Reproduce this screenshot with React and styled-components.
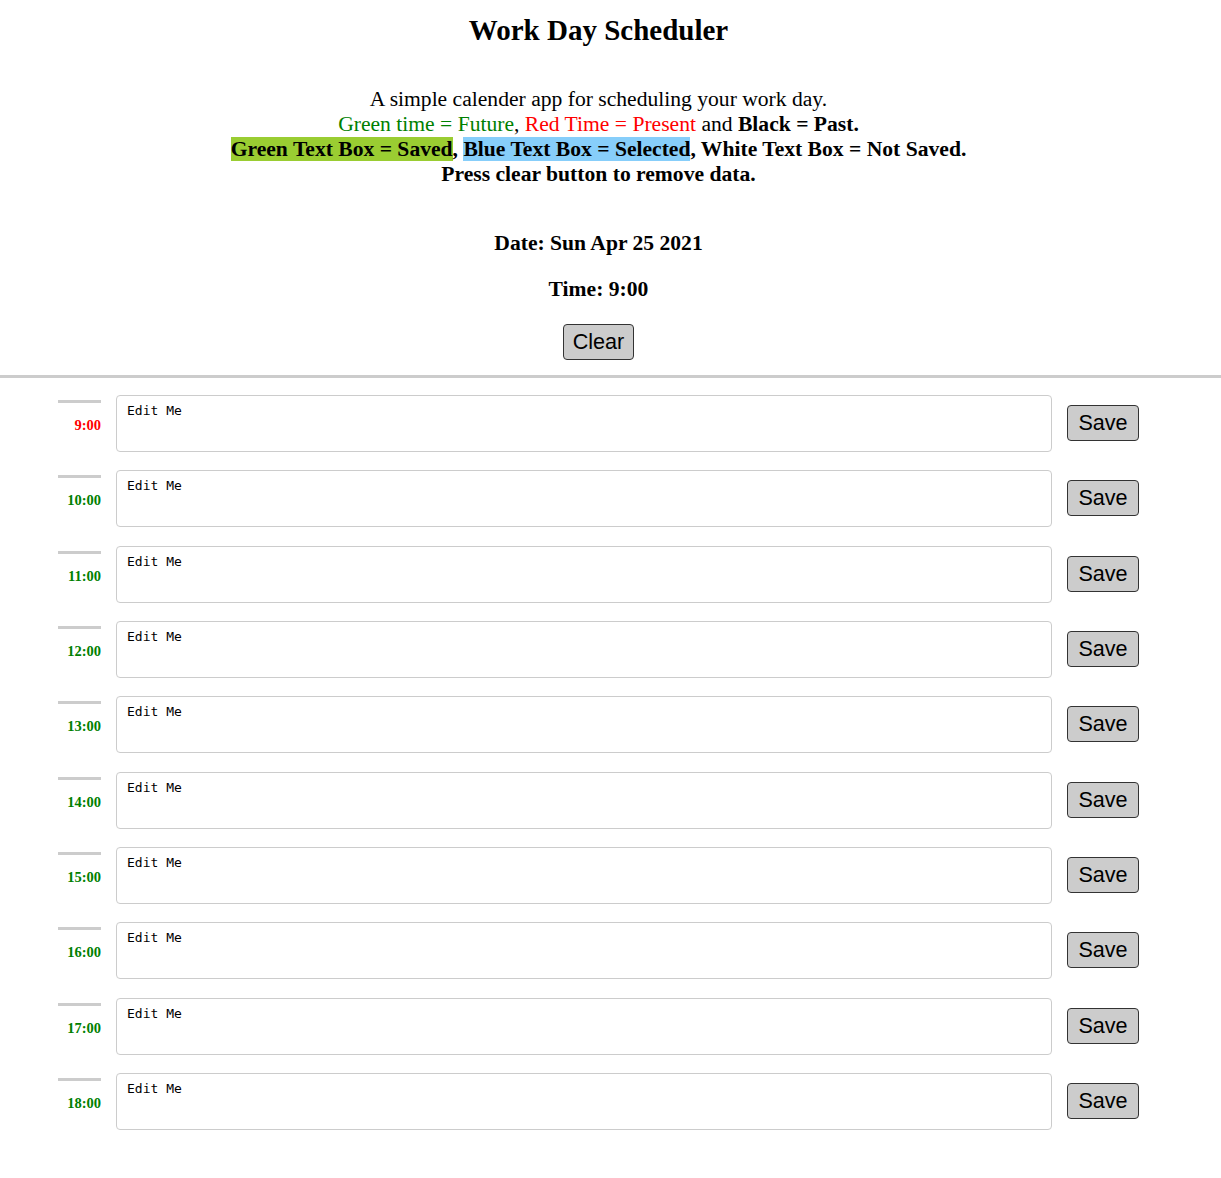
import React from "react";
import styled, { createGlobalStyle } from "styled-components";

const GlobalStyle = createGlobalStyle`
  body {
    margin: 0;
    background: #fff;
    font-family: "Liberation Serif", "Times New Roman", serif;
    color: #000;
  }
`;

const hours = [9, 10, 11, 12, 13, 14, 15, 16, 17, 18];
const currentHour = 9;

export default function App() {
  return (
    <>
      <GlobalStyle />
      <Header>
        <Title>Work Day Scheduler</Title>
        <Lead>
          A simple calender app for scheduling your work day.
          <br />
          <Green>Green time = Future</Green>, <Red>Red Time = Present</Red> and{" "}
          <b>Black = Past.</b>
          <br />
          <b>
            <Mark $bg="#9acd32">Green Text Box = Saved</Mark>,{" "}
            <Mark $bg="#87cefa">Blue Text Box = Selected</Mark>, White Text Box
            = Not Saved.
          </b>
          <br />
          <b>Press clear button to remove data.</b>
        </Lead>
        <Info>Date: Sun Apr 25 2021</Info>
        <Info>Time: 9:00</Info>
        <Button>Clear</Button>
      </Header>
      <Divider />
      <Schedule>
        {hours.map((h) => (
          <Row key={h}>
            <Hour $present={h === currentHour}>{h}:00</Hour>
            <Entry defaultValue="Edit Me" />
            <SaveCell>
              <Button>Save</Button>
            </SaveCell>
          </Row>
        ))}
      </Schedule>
    </>
  );
}

const Header = styled.header`
  width: 1197px;
  text-align: center;
  padding-top: 14px;
`;

const Title = styled.h1`
  margin: 0;
  font-size: 29px;
  line-height: 32px;
  font-weight: bold;
`;

const Lead = styled.p`
  margin: 41px 0 0;
  font-size: 21.6px;
  line-height: 25px;
`;

const Green = styled.span`
  color: green;
`;

const Red = styled.span`
  color: red;
`;

const Mark = styled.span`
  background: ${(p) => p.$bg};
`;

const Info = styled.p`
  margin: 45px 0 0;
  font-size: 21.6px;
  line-height: 23px;
  font-weight: bold;

  & + & {
    margin-top: 23px;
  }
`;

const Button = styled.button`
  font-family: "Liberation Sans", Arial, sans-serif;
  font-size: 21.6px;
  background: #cccccc;
  color: #000;
  border: 1px solid #333;
  border-radius: 4px;
  height: 36px;
  padding: 0 9px;
  cursor: pointer;

  ${Info} + ${Info} + & {
    margin-top: 23px;
  }
`;

const Divider = styled.hr`
  margin: 15px 0 0;
  border: none;
  border-top: 3px solid #cccccc;
`;

const Schedule = styled.main`
  padding: 17px 0 40px 58px;
  display: flex;
  flex-direction: column;
  gap: 18.33px;
`;

const Row = styled.div`
  display: grid;
  grid-template-columns: 43px 936px 72px;
  column-gap: 15px;
  height: 57px;
`;

const Hour = styled.div`
  border-top: 3px solid #cccccc;
  margin-top: 5px;
  padding-top: 14px;
  text-align: right;
  font-size: 14.5px;
  line-height: 17px;
  font-weight: bold;
  color: ${(p) => (p.$present ? "red" : "green")};
`;

const Entry = styled.textarea`
  box-sizing: border-box;
  width: 100%;
  height: 57px;
  resize: none;
  border: 1px solid #cccccc;
  border-radius: 4px;
  padding: 7px 10px;
  font-family: "DejaVu Sans Mono", monospace;
  font-size: 13px;
  line-height: 15px;
  color: #000;
  outline: none;
`;

const SaveCell = styled.div`
  padding-top: 10px;

  ${Button} {
    width: 72px;
  }
`;
